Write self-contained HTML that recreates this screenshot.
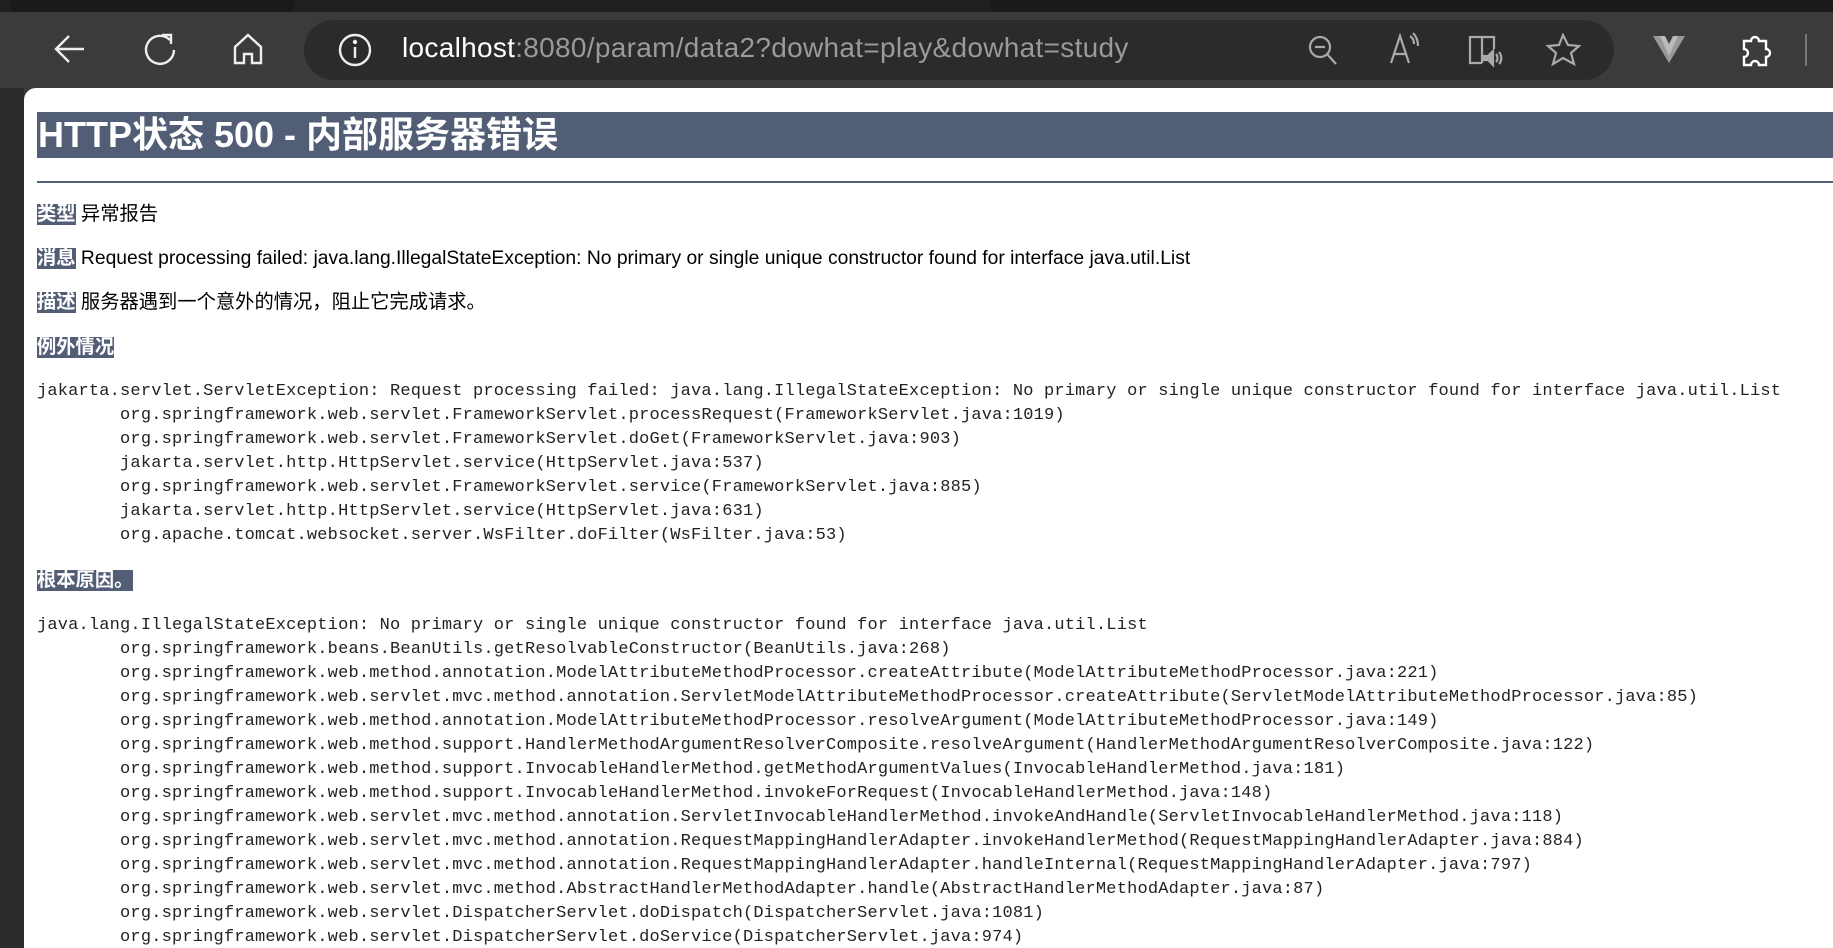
<!DOCTYPE html>
<html><head><meta charset="utf-8"><style>
*{margin:0;padding:0;box-sizing:border-box}
body{width:1833px;height:948px;overflow:hidden;background:#3b3b3b;position:relative;font-family:"Liberation Sans","Noto Sans CJK SC",sans-serif}
.top{position:absolute;left:0;top:0;width:1833px;height:12px;background:#202020}
.tab{position:absolute;left:10px;top:0;width:285px;height:12px;background:#1a1a1a;border-radius:0 0 6px 6px}
.tab2{position:absolute;left:990px;top:0;width:843px;height:12px;background:#1a1a1a;border-radius:0 0 0 6px}
.pill{position:absolute;left:304px;top:20px;width:1310px;height:60px;background:#2b2b2b;border-radius:30px}
.url{position:absolute;left:402px;top:32px;font-size:28px;letter-spacing:0.3px;color:#9a9a9a;white-space:nowrap}
.url b{font-weight:normal;color:#fff}
.side{position:absolute;left:0;top:88px;width:24px;height:860px;background:#2a2a2a}
.page{position:absolute;left:24px;top:88px;width:1809px;height:860px;background:#fff;border-radius:12px 0 0 0;overflow:hidden}
.h1{position:absolute;left:13px;top:24px;width:1800px;height:46px;background:#525d76;color:#fff;font-weight:bold;font-size:36px;line-height:46px;padding-left:1px}
.hr{position:absolute;left:13px;top:93px;width:1800px;height:2px;background:#525d76}
.p{position:absolute;left:13px;font-size:19.3px;color:#000;white-space:nowrap;line-height:24px}
.l{background:#525d76;color:#fff;font-weight:bold}
.pre{position:absolute;left:13px;font-family:"Liberation Mono","Noto Sans CJK SC",monospace;font-size:17px;letter-spacing:0.18px;line-height:24px;white-space:pre;color:#222}
svg{position:absolute}
</style></head><body>
<div class="top"></div><div class="tab"></div><div class="tab2"></div>
<svg style="left:52px;top:32px" width="36" height="34" viewBox="0 0 36 34" fill="none" stroke="#eee" stroke-width="2.4"><path d="M32 17H5M17 4L4 17l13 13"/></svg>
<svg style="left:143px;top:32px" width="36" height="36" viewBox="0 0 36 36" fill="none" stroke="#eee" stroke-width="2.4"><path d="M27 8A14 14 0 1 0 31 18"/><path d="M19 3h9v9"/></svg>
<svg style="left:230px;top:31px" width="36" height="36" viewBox="0 0 36 36" fill="none" stroke="#eee" stroke-width="2.4"><path d="M5 16L18 4l13 12v16H22v-9h-8v9H5z"/></svg>
<div class="pill"></div>
<svg style="left:337px;top:32px" width="36" height="36" viewBox="0 0 36 36" fill="none" stroke="#eee" stroke-width="2.4"><circle cx="18" cy="18" r="15"/><path d="M18 15v11"/><circle cx="18" cy="10" r="1" fill="#eee"/></svg>
<div class="url"><b>localhost</b>:8080/param/data2?dowhat=play&amp;dowhat=study</div>
<svg style="left:1306px;top:33px" width="34" height="34" viewBox="0 0 34 34" fill="none" stroke="#aaa" stroke-width="2.2"><circle cx="14" cy="14" r="10"/><path d="M9 14h10M21 21l9 10"/></svg>
<svg style="left:1388px;top:32px" width="36" height="34" viewBox="0 0 36 34" fill="none" stroke="#aaa" stroke-width="2.2"><path d="M3 31L12 4l9 27M6 22h12"/><path d="M22 4c3 2 4 5 4 8M25 1c3 3 5 7 5 13"/></svg>
<svg style="left:1468px;top:34px" width="36" height="34" viewBox="0 0 36 34" fill="none" stroke="#aaa" stroke-width="2.2"><path d="M14 29H2V3h12v26M14 3h12v12"/><path d="M16 22h4l5-5v14l-5-5h-4z" fill="#aaa"/><path d="M28 20c2 2 2 6 0 8M31 18c3 3 3 9 0 12"/></svg>
<svg style="left:1545px;top:33px" width="36" height="34" viewBox="0 0 36 34" fill="none" stroke="#aaa" stroke-width="2.2"><path d="M18 2l5 10 11 1-8 7 3 11-11-6-10 6 3-11-8-7 11-1z"/></svg>
<svg style="left:1652px;top:34px" width="34" height="30" viewBox="0 0 34 30"><path d="M1 2h10l6 12 6-12h10L17 29z" fill="#999"/><path d="M8 2h5l4 8 4-8h5L17 22z" fill="#bbb"/></svg>
<svg style="left:1738px;top:32px" width="36" height="36" viewBox="0 0 36 36" fill="none" stroke="#fff" stroke-width="2.4"><path d="M6 9h7a4 4 0 1 1 8 0h7v8a4 4 0 1 1 0 8v8H21a4 4 0 1 0-8 0H6v-8a4 4 0 1 0 0-8z"/></svg>
<div style="position:absolute;left:1805px;top:34px;width:2px;height:32px;background:#777"></div>
<div class="side"></div>
<div class="page">
<div class="h1">HTTP状态 500 - 内部服务器错误</div>
<div class="hr"></div>
<div class="p" style="top:115px"><span class="l">类型</span> 异常报告</div>
<div class="p" style="top:159px"><span class="l">消息</span> Request processing failed: java.lang.IllegalStateException: No primary or single unique constructor found for interface java.util.List</div>
<div class="p" style="top:203px"><span class="l">描述</span> 服务器遇到一个意外的情况，阻止它完成请求。</div>
<div class="p" style="top:248px"><span class="l">例外情况</span></div>
<div class="pre" style="top:292px">jakarta.servlet.ServletException: Request processing failed: java.lang.IllegalStateException: No primary or single unique constructor found for interface java.util.List
        org.springframework.web.servlet.FrameworkServlet.processRequest(FrameworkServlet.java:1019)
        org.springframework.web.servlet.FrameworkServlet.doGet(FrameworkServlet.java:903)
        jakarta.servlet.http.HttpServlet.service(HttpServlet.java:537)
        org.springframework.web.servlet.FrameworkServlet.service(FrameworkServlet.java:885)
        jakarta.servlet.http.HttpServlet.service(HttpServlet.java:631)
        org.apache.tomcat.websocket.server.WsFilter.doFilter(WsFilter.java:53)</div>
<div class="p" style="top:481px"><span class="l">根本原因。</span></div>
<div class="pre" style="top:526px">java.lang.IllegalStateException: No primary or single unique constructor found for interface java.util.List
        org.springframework.beans.BeanUtils.getResolvableConstructor(BeanUtils.java:268)
        org.springframework.web.method.annotation.ModelAttributeMethodProcessor.createAttribute(ModelAttributeMethodProcessor.java:221)
        org.springframework.web.servlet.mvc.method.annotation.ServletModelAttributeMethodProcessor.createAttribute(ServletModelAttributeMethodProcessor.java:85)
        org.springframework.web.method.annotation.ModelAttributeMethodProcessor.resolveArgument(ModelAttributeMethodProcessor.java:149)
        org.springframework.web.method.support.HandlerMethodArgumentResolverComposite.resolveArgument(HandlerMethodArgumentResolverComposite.java:122)
        org.springframework.web.method.support.InvocableHandlerMethod.getMethodArgumentValues(InvocableHandlerMethod.java:181)
        org.springframework.web.method.support.InvocableHandlerMethod.invokeForRequest(InvocableHandlerMethod.java:148)
        org.springframework.web.servlet.mvc.method.annotation.ServletInvocableHandlerMethod.invokeAndHandle(ServletInvocableHandlerMethod.java:118)
        org.springframework.web.servlet.mvc.method.annotation.RequestMappingHandlerAdapter.invokeHandlerMethod(RequestMappingHandlerAdapter.java:884)
        org.springframework.web.servlet.mvc.method.annotation.RequestMappingHandlerAdapter.handleInternal(RequestMappingHandlerAdapter.java:797)
        org.springframework.web.servlet.mvc.method.AbstractHandlerMethodAdapter.handle(AbstractHandlerMethodAdapter.java:87)
        org.springframework.web.servlet.DispatcherServlet.doDispatch(DispatcherServlet.java:1081)
        org.springframework.web.servlet.DispatcherServlet.doService(DispatcherServlet.java:974)</div>
</div>
</body></html>
